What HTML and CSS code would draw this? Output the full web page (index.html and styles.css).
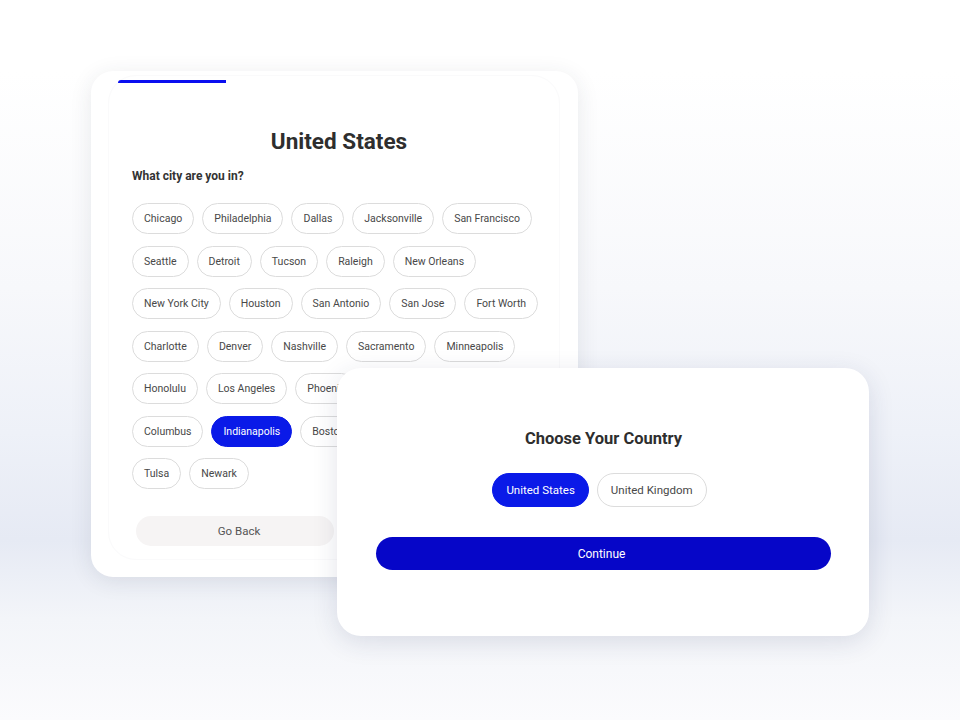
FILE: index.html
```html
<!DOCTYPE html>
<html lang="en">
<head>
<meta charset="utf-8">
<title>Choose Your Country</title>
<link rel="stylesheet" href="styles.css">
</head>
<body>
<div class="stage">
  <section class="card city-card">
    <div class="panel">
      <div class="progress"></div>
      <h1 class="title">United States</h1>
      <p class="question">What city are you in?</p>
      <div class="chips">
        <span class="chip">Chicago</span>
        <span class="chip">Philadelphia</span>
        <span class="chip">Dallas</span>
        <span class="chip">Jacksonville</span>
        <span class="chip">San Francisco</span>
        <span class="chip">Seattle</span>
        <span class="chip">Detroit</span>
        <span class="chip">Tucson</span>
        <span class="chip">Raleigh</span>
        <span class="chip">New Orleans</span>
        <span class="chip">New York City</span>
        <span class="chip">Houston</span>
        <span class="chip">San Antonio</span>
        <span class="chip">San Jose</span>
        <span class="chip">Fort Worth</span>
        <span class="chip">Charlotte</span>
        <span class="chip">Denver</span>
        <span class="chip">Nashville</span>
        <span class="chip">Sacramento</span>
        <span class="chip">Minneapolis</span>
        <span class="chip">Honolulu</span>
        <span class="chip">Los Angeles</span>
        <span class="chip">Phoenix</span>
        <span class="chip">Austin</span>
        <span class="chip">Baltimore</span>
        <span class="chip">Columbus</span>
        <span class="chip chip-active">Indianapolis</span>
        <span class="chip">Boston</span>
        <span class="chip">San Diego</span>
        <span class="chip">Washington</span>
        <span class="chip">Tulsa</span>
        <span class="chip">Newark</span>
      </div>
      <div class="actions">
        <button class="btn btn-back">Go Back</button>
        <button class="btn btn-next">Next</button>
      </div>
    </div>
  </section>

  <section class="card country-card">
    <h2 class="country-title">Choose Your Country</h2>
    <div class="country-options">
      <span class="chip chip-lg chip-active">United States</span>
      <span class="chip chip-lg">United Kingdom</span>
    </div>
    <button class="btn btn-continue">Continue</button>
  </section>
</div>
</body>
</html>
```

FILE: styles.css
```css
* { box-sizing: border-box; }

html, body {
  margin: 0;
  padding: 0;
}

body {
  width: 960px;
  height: 720px;
  overflow: hidden;
  font-family: Roboto, "Liberation Sans", Arial, sans-serif;
  color: #333;
  background: linear-gradient(180deg,
    #ffffff 0%,
    #ffffff 10%,
    #f7f8fb 40%,
    #eef1f8 60%,
    #e6eaf4 75%,
    #f3f5f9 86%,
    #fbfbfd 100%);
}

.stage {
  position: relative;
  width: 960px;
  height: 720px;
  padding: 71px 0 0 91px;
}

.card {
  background: #fff;
}

.city-card {
  width: 487px;
  height: 506px;
  border-radius: 22px;
  padding: 4px 18px 17px 17px;
  box-shadow: 0 4px 22px rgba(40, 45, 70, 0.10);
}

.panel {
  height: 485px;
  border: 1px solid #fafafb;
  border-radius: 28px;
  padding: 4px 0 0 23px;
  display: flex;
  flex-direction: column;
}

.progress {
  width: 108px;
  height: 3px;
  margin-left: -14px;
  background: #0a0ff0;
  border-radius: 3px 0 0 0;
}

.title {
  width: 414px;
  margin: 44px 0 0;
  text-align: center;
  font-size: 22.5px;
  line-height: 28px;
  font-weight: 700;
  color: #2e2e2e;
}

.question {
  margin: 13px 0 0;
  font-size: 12px;
  line-height: 16px;
  font-weight: 700;
  color: #333;
}

.chips {
  margin-top: 19px;
  width: 418px;
  display: flex;
  flex-wrap: wrap;
  column-gap: 8px;
  row-gap: 11.5px;
}

.chip {
  display: inline-flex;
  align-items: center;
  height: 31px;
  padding: 0 11px;
  border: 1px solid #dcdcdc;
  border-radius: 16px;
  font-size: 10.5px;
  color: #484848;
  background: #fff;
  white-space: nowrap;
}

.chip-active {
  background: #0a1ae8;
  border-color: #0a1ae8;
  color: #fff;
}

.actions {
  margin-top: 27px;
  padding-left: 4px;
  display: flex;
  gap: 12px;
}

.btn {
  border: none;
  font-family: inherit;
  cursor: pointer;
}

.btn-back,
.btn-next {
  width: 198px;
  height: 30px;
  border-radius: 15px;
  font-size: 11.5px;
  color: #555;
  background: #f6f4f4;
}

.btn-back {
  padding-left: 14px;
}

.btn-next {
  background: #0606c8;
  color: #fff;
}

.country-card {
  position: absolute;
  left: 337px;
  top: 368px;
  width: 532px;
  height: 268px;
  border-radius: 24px;
  padding: 61px 38px 0 39px;
  display: flex;
  flex-direction: column;
  align-items: center;
  box-shadow: 0 6px 26px rgba(40, 50, 90, 0.13);
}

.country-title {
  margin: 0;
  font-size: 16.5px;
  line-height: 20px;
  font-weight: 700;
  color: #2e2e2e;
}

.country-options {
  margin-top: 24px;
  margin-right: 8px;
  display: flex;
  gap: 8px;
}

.chip-lg {
  height: 34px;
  padding: 0 13px;
  border-radius: 17px;
  font-size: 11.5px;
}

.btn-continue {
  margin-top: 30px;
  width: 455px;
  height: 33px;
  padding-right: 10px;
  border-radius: 17px;
  background: #0606c8;
  color: #fff;
  font-size: 12px;
  font-weight: 400;
}
```
